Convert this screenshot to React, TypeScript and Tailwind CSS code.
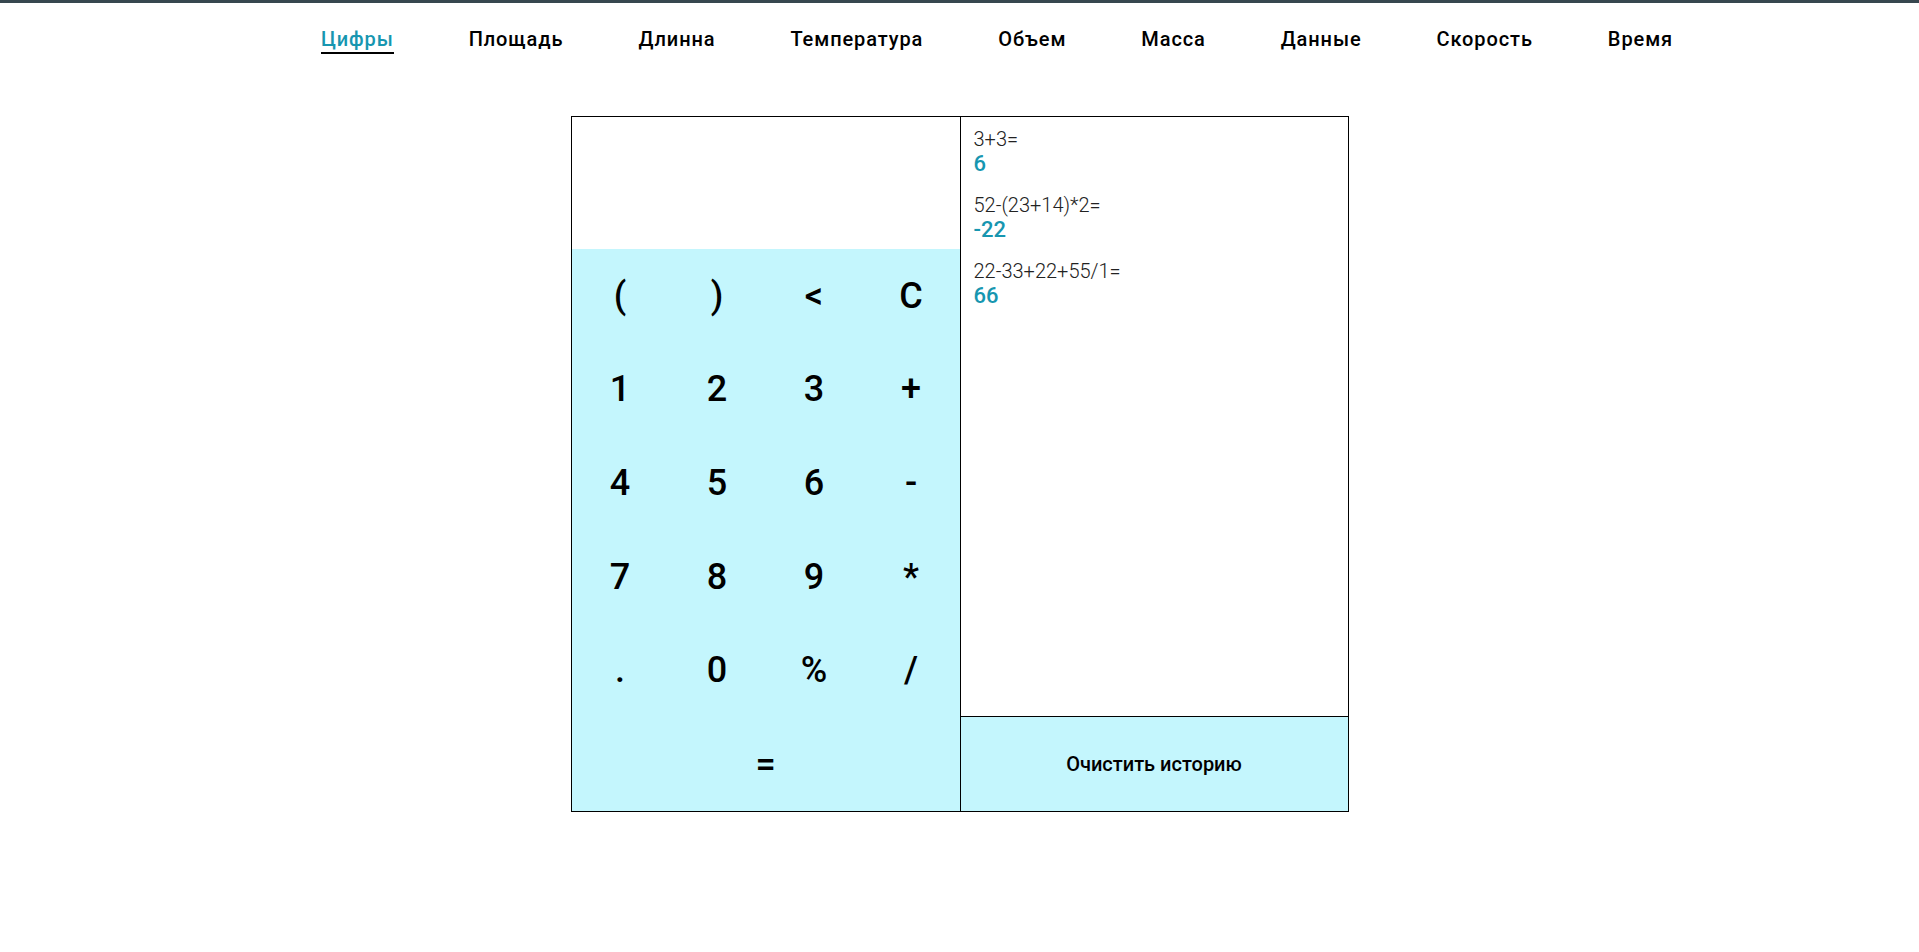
const tabs = ['Цифры', 'Площадь', 'Длинна', 'Температура', 'Объем', 'Масса', 'Данные', 'Скорость', 'Время'];

const keys = ['(', ')', '<', 'C', '1', '2', '3', '+', '4', '5', '6', '-', '7', '8', '9', '*', '.', '0', '%', '/'];

const history = [
  { expr: '3+3=', result: '6' },
  { expr: '52-(23+14)*2=', result: '-22' },
  { expr: '22-33+22+55/1=', result: '66' },
];

export default function App() {
  return (
    <div
      className="min-h-screen bg-white border-t-[3px] border-[#37474f] text-black"
      style={{ fontFamily: 'Roboto, sans-serif' }}
    >
      {/* Tabs */}
      <nav className="flex justify-center pt-[24px]">
        {tabs.map((t, i) => (
          <a
            key={t}
            href="#"
            className={
              i === 0
                ? 'ml-[75px] text-[20px] leading-[25px] tracking-[0.9px] font-medium text-[#1796b0] border-b-2 border-black'
                : 'ml-[75px] text-[20px] leading-[25px] tracking-[0.9px] font-medium text-black pb-[2px]'
            }
          >
            {t}
          </a>
        ))}
      </nav>

      {/* Calculator */}
      <div className="mx-auto mt-[62px] w-[778px] h-[696px] border border-black flex">
        <div className="w-[389px] border-r border-black flex flex-col">
          <div className="h-[132px] bg-white" />
          <div className="flex-1 bg-[#c4f6fd] grid grid-cols-4 grid-rows-6">
            {keys.map((k) => (
              <button key={k} className="flex items-center justify-center text-[36px] font-medium text-black">
                {k}
              </button>
            ))}
            <button className="col-span-4 flex items-center justify-center text-[36px] font-medium text-black">=</button>
          </div>
        </div>
        <div className="flex-1 flex flex-col">
          <div className="flex-1 px-[13px] pt-[10px]">
            {history.map((h) => (
              <div key={h.expr} className="mb-[16px]">
                <div className="text-[20px] leading-[24px] font-light text-[#222]">{h.expr}</div>
                <div className="text-[22px] leading-[26px] font-medium text-[#1796b0]">{h.result}</div>
              </div>
            ))}
          </div>
          <button className="h-[95px] border-t border-black bg-[#c4f6fd] text-[20px] font-medium text-black">
            Очистить историю
          </button>
        </div>
      </div>
    </div>
  );
}
